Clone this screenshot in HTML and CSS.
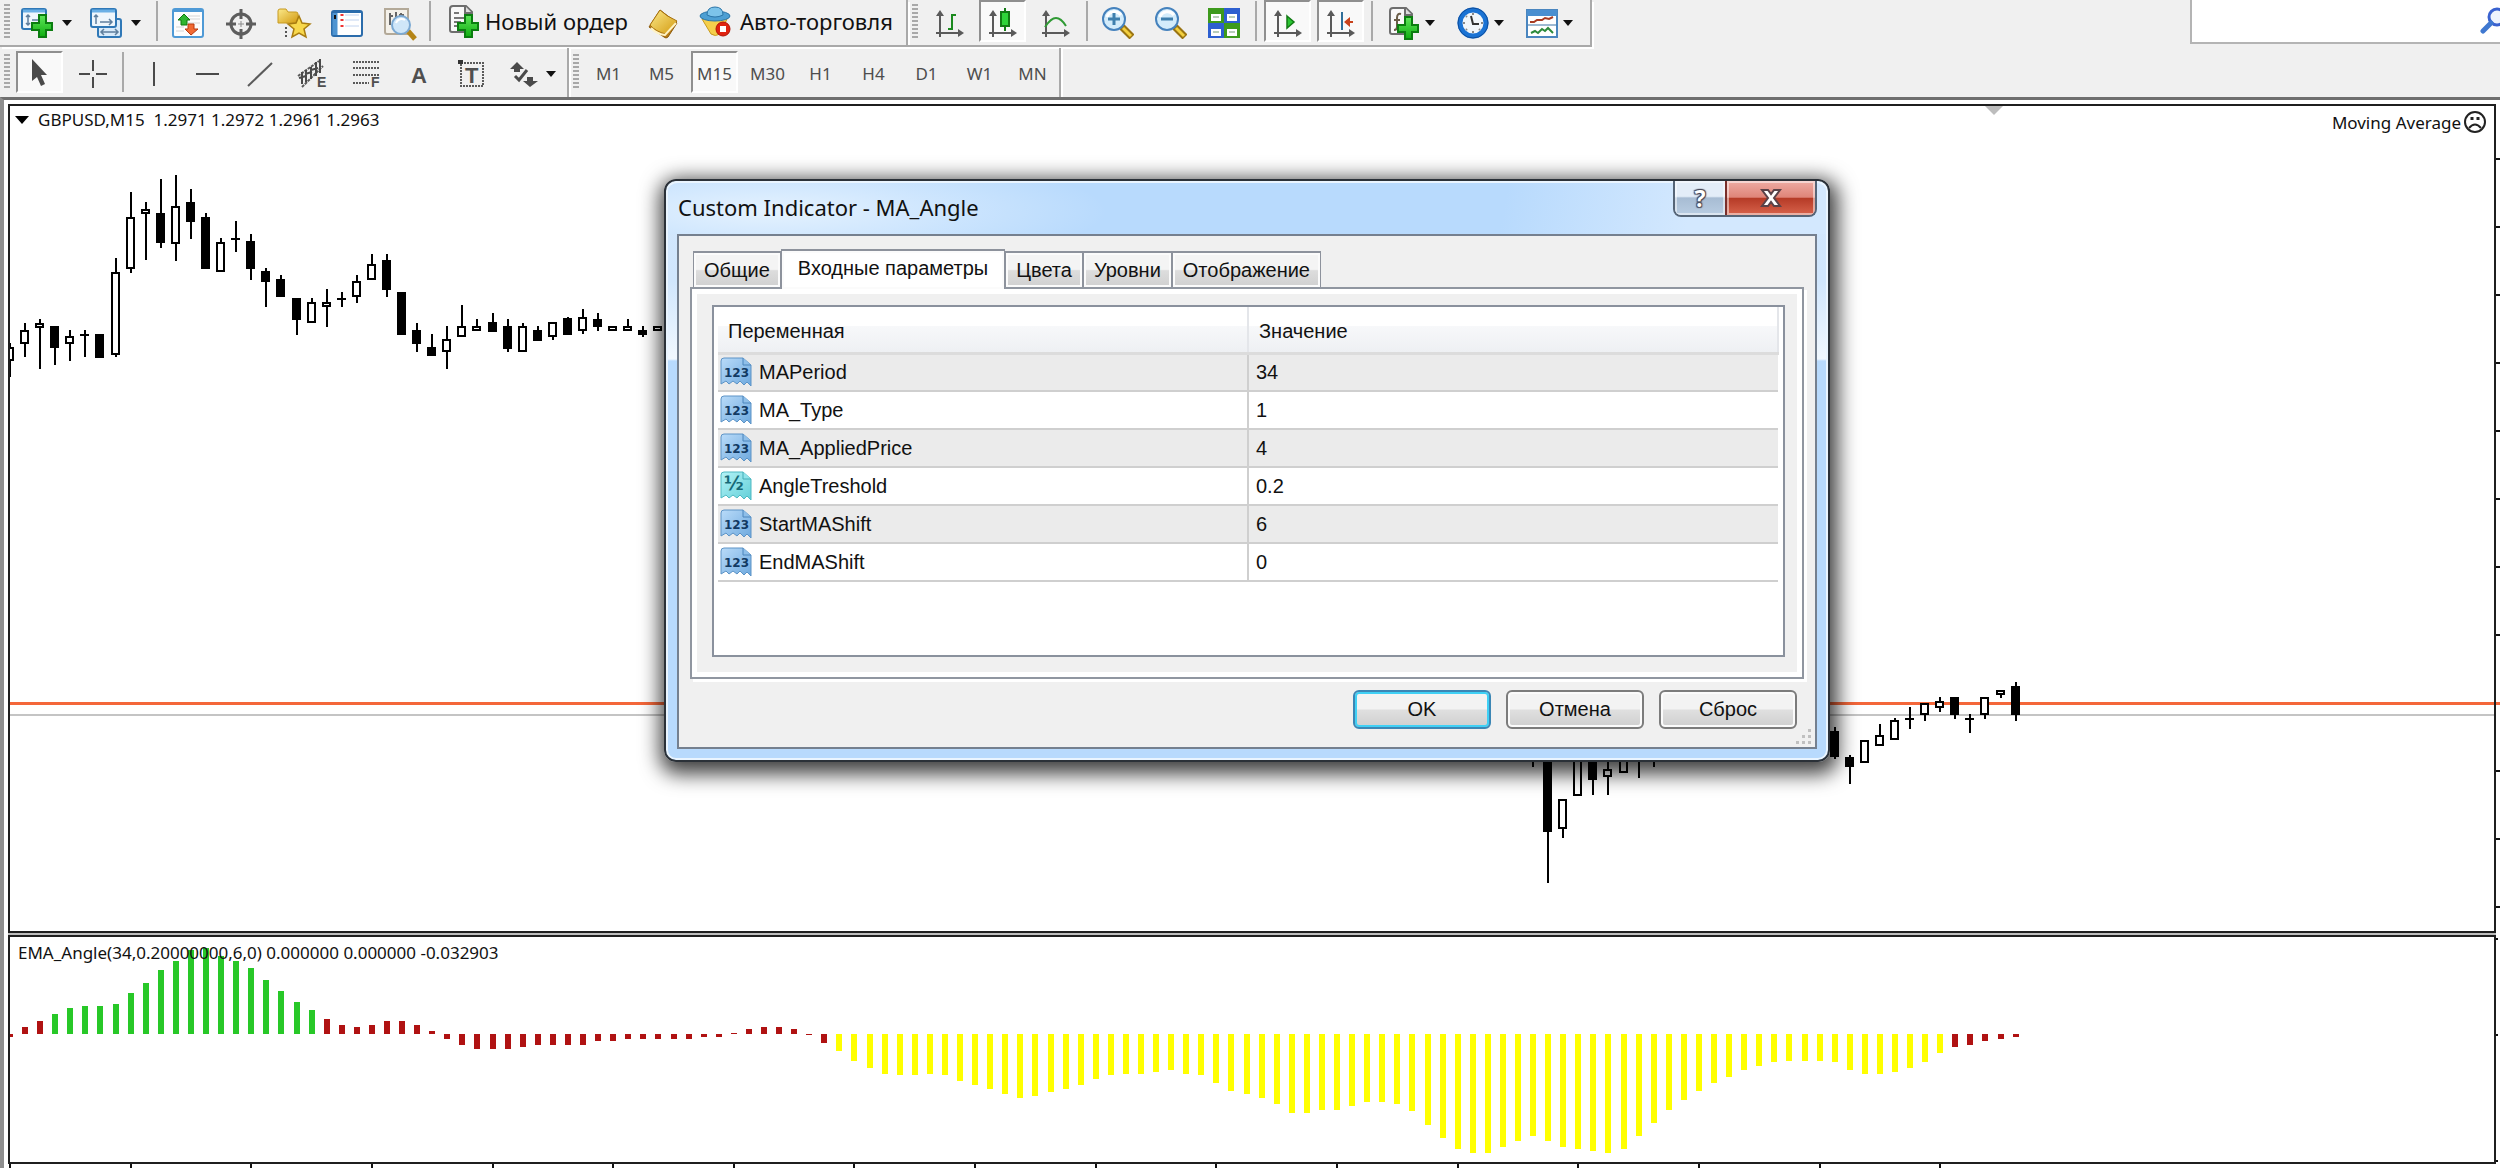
FILE: index.html
```html
<!DOCTYPE html>
<html lang="ru">

<head>
  <meta charset="UTF-8" />
  <title>GBPUSD,M15</title>
  <link rel="stylesheet" href="styles.css">
</head>

<body>
  <!-- shared icon parts -->
  <svg class="defs" aria-hidden="true">
    <defs>
      <linearGradient id="gPlus" x1="0" y1="0" x2="0" y2="1">
        <stop offset="0" stop-color="#5fe65a" /><stop offset="1" stop-color="#0fae10" />
      </linearGradient>
      <linearGradient id="gGold" x1="0" y1="0" x2="1" y2="1">
        <stop offset="0" stop-color="#fbe98a" /><stop offset="1" stop-color="#d39a10" />
      </linearGradient>
      <linearGradient id="gBlue" x1="0" y1="0" x2="1" y2="1">
        <stop offset="0" stop-color="#b9dbf9" /><stop offset="1" stop-color="#6ea9de" />
      </linearGradient>
      <linearGradient id="gCyan" x1="0" y1="0" x2="1" y2="1">
        <stop offset="0" stop-color="#b4f3f7" /><stop offset="1" stop-color="#62cfd8" />
      </linearGradient>
      <symbol id="plus" viewBox="0 0 22 24">
        <path d="M8 1h7v8h6v7h-6v7H8v-7H1V9h7z" fill="url(#gPlus)" stroke="#0b7d10" stroke-width="2" />
      </symbol>
      <symbol id="axes" viewBox="0 0 32 32">
        <path d="M7 5v25M3 26h24" stroke="#5a5a5a" stroke-width="2" />
        <path d="M3 9l4-6 4 6zM25 22l6 4-6 4z" fill="#5a5a5a" />
      </symbol>
      <symbol id="page" viewBox="0 0 32 32">
        <path d="M2 4q0-3 3-3h13l6 6v18q0 2-2 2H4q-2 0-2-2z" fill="#f8f8f8" stroke="#6e6e6e" stroke-width="2" />
        <path d="M17 1v7h7" fill="#ddd" stroke="#6e6e6e" stroke-width="2" />
      </symbol>
      <symbol id="lens" viewBox="0 0 32 32">
        <path d="M20 20l10 10" stroke="#9a7412" stroke-width="7" />
        <path d="M21 21l8 8" stroke="#f3cf3e" stroke-width="3" />
        <circle cx="12" cy="12" r="11" fill="#d3ecfb" stroke="#4582bd" stroke-width="2" />
        <path d="M5 10a8 8 0 0 1 14-2" fill="none" stroke="#fff" stroke-width="3" />
      </symbol>
      <symbol id="int" viewBox="0 0 32 30">
        <path d="M1 4q0-3 3-3h19l8 7v21l-4-4-3 3-4-4-3 3-4-3-4 3-3-3-5 3z" fill="url(#gBlue)" stroke="#5c93c6" />
        <path d="M23 1v7h8" fill="#8fbfe9" stroke="#4c86bd" />
        <text x="4" y="20" class="icon-num">123</text>
      </symbol>
      <symbol id="double" viewBox="0 0 32 30">
        <path d="M1 4q0-3 3-3h19l8 7v21l-4-4-3 3-4-4-3 3-4-3-4 3-3-3-5 3z" fill="url(#gCyan)" stroke="#4fb9c2" />
        <path d="M23 1v7h8" fill="#8fe3ea" stroke="#45adb7" />
        <text x="4" y="19" class="icon-num icon-frac">½</text>
      </symbol>
    </defs>
  </svg>

  <header class="toolbars">
    <div class="row">
      <div class="toolbar">
        <span class="grip"></span>
        <button class="tool drop" aria-label="Новый график">
          <svg class="icon" viewBox="0 0 32 32">
            <rect x="1" y="2" width="24" height="20" rx="2" fill="#eef6fc" stroke="#2f78b7" stroke-width="2" />
            <path d="M2 4h22" stroke="#6ab0e6" stroke-width="3" />
            <path d="M7 8v10M5 10l2-2 2 2M5 16l2 2 2-2M11 13h9" fill="none" stroke="#5f7f9d" stroke-width="1.5" />
            <use href="#plus" x="10" y="7" width="22" height="24" />
          </svg>
          <span class="caret"></span>
        </button>
        <button class="tool drop" aria-label="Профили">
          <svg class="icon" viewBox="0 0 32 32">
            <rect x="8" y="12" width="23" height="18" rx="2" fill="#d9ebfa" stroke="#2f78b7" stroke-width="2" />
            <path d="M11 25h17M14 22l-3 3 3 3M25 22l3 3-3 3" fill="none" stroke="#5f7f9d" stroke-width="1.5" />
            <rect x="1" y="2" width="25" height="18" rx="2" fill="#eef6fc" stroke="#2f78b7" stroke-width="2" />
            <path d="M2 4h23" stroke="#6ab0e6" stroke-width="3" />
            <path d="M6 8v9M4 10l2-2 2 2M10 15h12M19 12l3 3-3 3" fill="none" stroke="#5f7f9d" stroke-width="1.5" />
          </svg>
          <span class="caret"></span>
        </button>
        <span class="sep"></span>
        <button class="tool" aria-label="Обзор рынка">
          <svg class="icon" viewBox="0 0 32 32">
            <rect x="1" y="2" width="30" height="28" rx="2" fill="#fdfdfd" stroke="#4f9ad6" stroke-width="2" />
            <path d="M1 4h30" stroke="#4f9ad6" stroke-width="2" />
            <path d="M16 9h12M16 12h12M4 20h8M4 24h8M16 16h12" stroke="#d5d5d5" />
            <path d="M12 7l6 6h-3v5H9v-5H6z" fill="#2fb52f" stroke="#11790f" />
            <path d="M19 28l-6-6h3v-5h6v5h4z" fill="#f26a33" stroke="#b93a10" />
          </svg>
        </button>
        <button class="tool" aria-label="Окно данных">
          <svg class="icon" viewBox="0 0 32 32">
            <circle cx="16" cy="17" r="10" fill="none" stroke="#5d5d5d" stroke-width="3" />
            <path d="M16 2v10M16 22v10M1 17h10M21 17h10" stroke="#5d5d5d" stroke-width="3" />
            <path d="M16 14v6M13 17h6" stroke="#8a8a8a" />
          </svg>
        </button>
        <button class="tool" aria-label="Навигатор">
          <svg class="icon" viewBox="0 0 32 32">
            <path d="M0 4q0-2 2-2h6l2 3h8q2 0 2 2v9H0z" fill="url(#gGold)" stroke="#c79a21" />
            <path d="M8 20v10" stroke="#555" stroke-width="2" stroke-dasharray="2 2" />
            <path d="M21 9l3 7 8 1-6 5 2 8-7-4-7 4 2-8-6-5 8-1z" fill="#f8d84c" stroke="#a97c10" stroke-width="1.5" />
          </svg>
        </button>
        <button class="tool" aria-label="Терминал">
          <svg class="icon" viewBox="0 0 32 32">
            <rect x="1" y="4" width="30" height="25" rx="2" fill="#fff" stroke="#2b6cab" stroke-width="2" />
            <path d="M1 5h30" stroke="#2b6cab" stroke-width="2" />
            <path d="M4 6v22" stroke="#4e94d1" stroke-width="5" />
            <path d="M4 8v4" stroke="#111" stroke-width="2" />
            <path d="M11 7v2M11 12v2M11 18v2" stroke="#e33" stroke-width="3" />
            <path d="M14 8h14M14 13h14M14 19h14" stroke="#c2d4f0" />
          </svg>
        </button>
        <button class="tool" aria-label="Тестер стратегий">
          <svg class="icon" viewBox="0 0 32 32">
            <path d="M1 2h23v25H3q-2 0-2-2z" fill="#f4f1ea" stroke="#b3a998" stroke-width="2" />
            <path d="M6 6v12M5 9h4M12 5v8M17 6v9M15 8h5" stroke="#666" stroke-width="2" />
            <path d="M24 24l7 8" stroke="#b58517" stroke-width="5" />
            <circle cx="17" cy="18" r="9" fill="#cfe6f8" stroke="#7ba9d3" stroke-width="2" />
            <path d="M12 16a6 6 0 0 1 9-3" fill="none" stroke="#fff" stroke-width="2" />
          </svg>
        </button>
        <span class="sep"></span>
        <button class="tool labelled">
          <svg class="icon" viewBox="0 0 32 32">
            <use href="#page" width="32" height="32" />
            <path d="M6 8h5M6 13h13M6 17h7M6 21h4" stroke="#777" stroke-width="2" />
            <use href="#plus" x="9" y="9" width="22" height="24" />
          </svg>
          Новый ордер
        </button>
        <button class="tool" aria-label="MetaEditor">
          <svg class="icon" viewBox="0 0 32 32">
            <path d="M2 20L13 3l17 13-9 14q-2 2-4 0z" fill="#b87c16" stroke="#8d5b0d" />
            <path d="M3 18L13 3q6 6 17 11L19 27Q9 25 3 18z" fill="url(#gGold)" stroke="#a8720e" />
            <path d="M4 21q6 6 14 7l11-12" fill="none" stroke="#fff3c4" stroke-width="2" />
          </svg>
        </button>
        <button class="tool labelled auto">
          <svg class="icon" viewBox="0 0 32 32">
            <path d="M3 14h25l-7 15q-5 3-9 0z" fill="#f5cf4b" stroke="#c79a21" />
            <ellipse cx="16" cy="11" rx="15" ry="5" fill="#4d9fd3" stroke="#2b75a8" />
            <path d="M8 10q0-8 8-8t8 8q-8 4-16 0z" fill="#7cc3ea" stroke="#2b75a8" />
            <circle cx="24" cy="24" r="7" fill="#e02310" stroke="#b01405" />
            <rect x="21" y="21" width="6" height="6" fill="#fff" />
          </svg>
          Авто-торговля
        </button>
      </div>

      <div class="toolbar charts">
        <span class="grip"></span>
        <button class="tool" aria-label="Бары">
          <svg class="icon" viewBox="0 0 32 32">
            <use href="#axes" width="32" height="32" />
            <path d="M19 7v16M19 8h4M15 22h4" stroke="#1b8a1f" stroke-width="2" />
          </svg>
        </button>
        <button class="tool pressed" aria-label="Свечи">
          <svg class="icon" viewBox="0 0 32 32">
            <use href="#axes" width="32" height="32" />
            <path d="M19 1v23" stroke="#127a14" stroke-width="2" />
            <rect x="15" y="5" width="8" height="14" fill="#2fd339" stroke="#127a14" stroke-width="2" />
          </svg>
        </button>
        <button class="tool" aria-label="Линия">
          <svg class="icon" viewBox="0 0 32 32">
            <use href="#axes" width="32" height="32" />
            <path d="M6 20q6-9 11-9t10 8" fill="none" stroke="#2f9a34" stroke-width="2" />
          </svg>
        </button>
        <span class="sep"></span>
        <button class="tool" aria-label="Приблизить">
          <svg class="icon" viewBox="0 0 32 32">
            <use href="#lens" width="32" height="32" />
            <path d="M12 6v12M6 12h12" stroke="#3f80ae" stroke-width="3" />
          </svg>
        </button>
        <button class="tool" aria-label="Отдалить">
          <svg class="icon" viewBox="0 0 32 32">
            <use href="#lens" width="32" height="32" />
            <path d="M6 12h12" stroke="#3f80ae" stroke-width="3" />
          </svg>
        </button>
        <button class="tool" aria-label="Окна мозаикой">
          <svg class="icon" viewBox="0 0 32 32">
            <path d="M0 1h16v15H0zM16 16h16v15H16z" fill="#3d9a1c" />
            <path d="M16 1h16v15H16zM0 16h16v15H0z" fill="#2d5fd0" />
            <path d="M3 7h10v7H3zM19 7h10v7H19zM3 22h10v7H3zM19 22h10v7H19z" fill="#fff" />
            <path d="M5 10h6M21 10h6M5 25h6M21 25h6" stroke="#b9cdb9" stroke-width="2" />
          </svg>
        </button>
        <span class="sep"></span>
        <button class="tool pressed" aria-label="Автопрокрутка">
          <svg class="icon" viewBox="0 0 32 32">
            <use href="#axes" width="32" height="32" />
            <path d="M16 9l7 6-7 6z" fill="#2bc632" stroke="#127a14" stroke-width="1.5" />
          </svg>
        </button>
        <button class="tool pressed" aria-label="Сдвиг графика">
          <svg class="icon" viewBox="0 0 32 32">
            <use href="#axes" width="32" height="32" />
            <path d="M18 5v18" stroke="#2f6f9a" stroke-width="2" />
            <path d="M20 15l6-5v4h3v2h-3v4z" fill="#c8421b" />
          </svg>
        </button>
        <span class="sep"></span>
        <button class="tool drop" aria-label="Индикаторы">
          <svg class="icon" viewBox="0 0 32 32">
            <use href="#page" width="32" height="32" />
            <path d="M13 7q-4-1-4 4v9q0 3-3 3M6 13h6" fill="none" stroke="#6a5d48" stroke-width="2" />
            <use href="#plus" x="9" y="9" width="22" height="24" />
          </svg>
          <span class="caret"></span>
        </button>
        <button class="tool drop" aria-label="Периоды">
          <svg class="icon" viewBox="0 0 32 32">
            <circle cx="16" cy="16" r="13" fill="#f1f6fa" stroke="#1a73d4" stroke-width="5" />
            <circle cx="16" cy="16" r="15" fill="none" stroke="#0e4d9c" />
            <path d="M14 9l2 8h6" fill="none" stroke="#333" stroke-width="2" />
            <path d="M16 6v2M16 24v2M6 16h2M24 16h2M9 9l1 1M23 23l-1-1M9 23l1-1" stroke="#888" stroke-width="2" />
          </svg>
          <span class="caret"></span>
        </button>
        <button class="tool drop" aria-label="Шаблоны">
          <svg class="icon" viewBox="0 0 32 32">
            <rect x="1" y="3" width="30" height="27" fill="#fff" stroke="#4a86bf" stroke-width="2" />
            <path d="M1 6h30" stroke="#4a8fd0" stroke-width="6" />
            <path d="M2 18h28" stroke="#9db9d2" stroke-width="2" />
            <path d="M4 15h4l3-2h5l3-2 4 1 4-2" fill="none" stroke="#a83b22" stroke-width="2" />
            <path d="M5 26l4-2 3 2 4-4 3 2 3-3 5 5" fill="none" stroke="#2c8a3b" stroke-width="2" />
          </svg>
          <span class="caret"></span>
        </button>
      </div>

      <div class="search">
        <input type="search" aria-label="Поиск">
        <svg class="search-icon" viewBox="0 0 28 28" aria-hidden="true">
          <circle cx="17" cy="10" r="8" fill="#eef3fd" stroke="#3a62d0" stroke-width="3" />
          <path d="M11 16L3 24" stroke="#3f78d0" stroke-width="5" stroke-linecap="round" />
        </svg>
      </div>
    </div>

    <div class="row second">
      <div class="toolbar">
        <span class="grip"></span>
        <button class="tool pressed" aria-label="Курсор">
          <svg class="icon" viewBox="0 0 32 32">
            <path d="M8 1v22l5-4 4 9 4-2-4-9h6z" fill="#4a4a4a" />
          </svg>
        </button>
        <button class="tool" aria-label="Перекрестие">
          <svg class="icon" viewBox="0 0 32 32">
            <path d="M16 2v11M16 19v11M2 16h11M19 16h11" stroke="#4a4a4a" stroke-width="2" />
          </svg>
        </button>
        <span class="sep"></span>
        <button class="tool" aria-label="Вертикальная линия">
          <svg class="icon" viewBox="0 0 32 32"><path d="M16 4v24" stroke="#4a4a4a" stroke-width="2" /></svg>
        </button>
        <button class="tool" aria-label="Горизонтальная линия">
          <svg class="icon" viewBox="0 0 32 32"><path d="M5 16h23" stroke="#4a4a4a" stroke-width="2" /></svg>
        </button>
        <button class="tool" aria-label="Трендовая линия">
          <svg class="icon" viewBox="0 0 32 32"><path d="M4 28L28 5" stroke="#5a5a5a" stroke-width="2" /></svg>
        </button>
        <button class="tool" aria-label="Канал">
          <svg class="icon" viewBox="0 0 32 32">
            <path d="M1 18L22 3M5 29L26 8" stroke="#5a5a5a" stroke-width="2" stroke-dasharray="3 1" />
            <path d="M5 14v12M9 12v12M14 9v12M19 4v14M23 1v14M2 20l7-2M8 16l7-2M14 12l7-2" stroke="#4a4a4a" stroke-width="2" />
            <text x="20" y="29" class="icon-letter small">E</text>
          </svg>
        </button>
        <button class="tool" aria-label="Фибоначчи">
          <svg class="icon" viewBox="0 0 32 32">
            <path d="M3 4h26M3 10h26M3 17h26M3 25h16" stroke="#5a5a5a" stroke-width="2" stroke-dasharray="2 1" />
            <text x="21" y="29" class="icon-letter small">F</text>
          </svg>
        </button>
        <button class="tool" aria-label="Текст">
          <svg class="icon" viewBox="0 0 32 32"><text x="8" y="25" class="icon-letter">A</text></svg>
        </button>
        <button class="tool" aria-label="Текстовая метка">
          <svg class="icon" viewBox="0 0 32 32">
            <rect x="5" y="5" width="22" height="23" fill="none" stroke="#5a5a5a" stroke-width="2" stroke-dasharray="2 1" />
            <path d="M2 2h5v4H2z" fill="#333" />
            <text x="9" y="25" class="icon-letter">T</text>
          </svg>
        </button>
        <button class="tool drop" aria-label="Стрелки">
          <svg class="icon" viewBox="0 0 32 32">
            <path d="M7 4l7 7h-4v3H4v-3H0zM20 29l-7-6h4v-4h6v4h5z" fill="#4a4a4a" />
            <path d="M5 18l4 4 8-10" fill="none" stroke="#4a4a4a" stroke-width="3" />
          </svg>
          <span class="caret"></span>
        </button>
      </div>

      <div class="toolbar">
        <span class="grip"></span>
        <button class="tool period">M1</button>
        <button class="tool period">M5</button>
        <button class="tool period pressed">M15</button>
        <button class="tool period">M30</button>
        <button class="tool period">H1</button>
        <button class="tool period">H4</button>
        <button class="tool period">D1</button>
        <button class="tool period">W1</button>
        <button class="tool period">MN</button>
      </div>
    </div>
  </header>

  <main class="chart-window">
    <section class="pane">
      <svg class="plot" id="pricePlot"></svg>
      <div class="pane-title"><span class="tri"></span>GBPUSD,M15&nbsp; 1.2971 1.2972 1.2961 1.2963</div>
      <span class="shift-mark"></span>
      <div class="expert">Moving Average
        <svg class="face" viewBox="0 0 24 24">
          <circle cx="12" cy="12" r="10" fill="none" stroke="#222" stroke-width="2" />
          <path d="M9 7v3M15 7v3" stroke="#222" stroke-width="3" />
          <path d="M6 18q6-7 12 0" fill="none" stroke="#222" stroke-width="2" />
        </svg>
      </div>
    </section>
    <svg class="axis" id="priceAxis"></svg>
    <section class="pane">
      <svg class="plot" id="anglePlot"></svg>
      <div class="pane-title sub">EMA_Angle(34,0.20000000,6,0) 0.000000 0.000000 -0.032903</div>
    </section>
    <svg class="axis" id="angleAxis"></svg>
    <svg class="time-axis" id="timeAxis"></svg>
  </main>

  <!-- indicator properties dialog -->
  <div class="dialog" role="dialog" aria-labelledby="dlgTitle">
    <div class="titlebar">
      <h1 class="dialog-title" id="dlgTitle">Custom Indicator - MA_Angle</h1>
      <div class="caption-buttons">
        <button class="caption help" aria-label="Справка">?</button>
        <button class="caption close" aria-label="Закрыть">
          <svg class="close-icon" viewBox="0 0 22 20">
            <path d="M2 2h6l3 4 3-4h6l-6 8 6 8h-6l-3-4-3 4H2l6-8z" fill="#fff" stroke="#5a4248" stroke-width="2" />
          </svg>
        </button>
      </div>
    </div>
    <div class="client">
      <div class="tabs" role="tablist">
        <button class="tab" role="tab">Общие</button>
        <button class="tab active" role="tab" aria-selected="true">Входные параметры</button>
        <button class="tab" role="tab">Цвета</button>
        <button class="tab" role="tab">Уровни</button>
        <button class="tab" role="tab">Отображение</button>
      </div>
      <div class="tab-page">
        <div class="list">
          <table class="params">
            <thead>
              <tr><th>Переменная</th><th>Значение</th></tr>
            </thead>
            <tbody>
              <tr><td><span class="name"><svg class="type"><use href="#int" /></svg>MAPeriod</span></td><td>34</td></tr>
              <tr><td><span class="name"><svg class="type"><use href="#int" /></svg>MA_Type</span></td><td>1</td></tr>
              <tr><td><span class="name"><svg class="type"><use href="#int" /></svg>MA_AppliedPrice</span></td><td>4</td></tr>
              <tr><td><span class="name"><svg class="type"><use href="#double" /></svg>AngleTreshold</span></td><td>0.2</td></tr>
              <tr><td><span class="name"><svg class="type"><use href="#int" /></svg>StartMAShift</span></td><td>6</td></tr>
              <tr><td><span class="name"><svg class="type"><use href="#int" /></svg>EndMAShift</span></td><td>0</td></tr>
            </tbody>
          </table>
        </div>
      </div>
      <div class="actions">
        <button class="btn default">OK</button>
        <button class="btn">Отмена</button>
        <button class="btn">Сброс</button>
      </div>
      <svg class="resize" viewBox="0 0 16 16">
        <path d="M12 0h3v3h-3zM12 6h3v3h-3zM12 12h3v3h-3zM6 6h3v3H6zM6 12h3v3H6zM0 12h3v3H0z" fill="#c0c0c0" />
      </svg>
    </div>
  </div>

  <script src="chart.js"></script>
</body>

</html>
```

FILE: styles.css
```css
:root {
  --face: #f0f0f0;
  --line: #a9a9a9;
  --frame: #1f1f1f;
  --glass: #b8dafd;
  --ui: "Noto Sans", "Open Sans", sans-serif;
  --dlg: "Liberation Sans", Arial, sans-serif;
}
* {
  box-sizing: border-box;
  margin: 0;
  padding: 0;
}
body {
  display: flex;
  flex-direction: column;
  height: 100vh;
  overflow: hidden;
  background: var(--face);
  color: #111;
  font-family: var(--ui);
  font-size: 17px;
}
button {
  font: inherit;
  color: inherit;
  border: none;
  background: none;
}
.defs {
  position: absolute;
  width: 0;
  height: 0;
}

/* Toolbars */
.row {
  display: flex;
  height: 48px;
}
.row.second {
  height: 49px;
}
.toolbar {
  display: flex;
  align-items: flex-start;
  border-right: 2px solid var(--line);
  border-bottom: 2px solid var(--line);
  box-shadow: 2px 2px 0 #fff;
  padding-right: 6px;
  height: 47px;
}
.second .toolbar {
  border-bottom: none;
  box-shadow: 2px 0 0 #fff;
  padding: 3px 0 0;
  height: 49px;
}
.grip {
  width: 6px;
  height: 36px;
  margin: 4px 5px 0 4px;
  background: repeating-linear-gradient(#a8a8a8 0 2px, var(--face) 2px 4px);
}
.second .grip {
  margin: 3px 3px 0 4px;
}
.sep {
  width: 2px;
  height: 40px;
  margin: 1px 3px 0;
  background: var(--line);
}
.charts .sep {
  margin: 1px 4px 0;
}
.tool {
  display: flex;
  align-items: center;
  justify-content: center;
  width: 47px;
  height: 42px;
  margin: 0 3px;
  padding-top: 3px;
}
.tool.pressed {
  background: #f9f9f9;
  border: 2px solid #fff;
  border-top-color: #8f8f8f;
  border-left-color: #8f8f8f;
}
.tool.drop {
  width: 69px;
  margin: 0;
  justify-content: flex-start;
  padding-left: 6px;
  gap: 9px;
}
.charts .tool.drop {
  padding-left: 11px;
  gap: 5px;
}
.second .tool.drop {
  padding-left: 12px;
  gap: 4px;
}
.tool.labelled {
  width: auto;
  margin: 0;
  padding: 0 9px 0 14px;
  gap: 5px;
  font-size: 22px;
  white-space: nowrap;
}
.tool.auto {
  padding: 0 7px 0 9px;
  gap: 9px;
}
.icon {
  width: 32px;
  height: 32px;
  flex: none;
  overflow: visible;
}
.caret {
  border: 5px solid transparent;
  border-top: 6px solid #111;
  border-bottom: none;
}
.period {
  color: #4d4d4d;
}
.icon-letter {
  font: bold 22px "Liberation Sans", sans-serif;
  fill: #4f4f4f;
}
.icon-letter.small {
  font-size: 14px;
}
.search {
  display: flex;
  align-items: flex-start;
  flex: 0 0 310px;
  height: 44px;
  margin-left: auto;
  overflow: hidden;
  background: #fff;
  border-left: 2px solid #b4b4b4;
  border-bottom: 2px solid #b4b4b4;
}
.search input {
  flex: none;
  width: 288px;
  height: 42px;
  border: none;
  outline: none;
  font: inherit;
}
.search-icon {
  flex: none;
  width: 28px;
  height: 28px;
  margin-top: 7px;
}

/* Chart window */
.chart-window {
  flex: 1;
  min-height: 0;
  display: grid;
  grid-template-columns: 1fr 4px;
  grid-template-rows: 1fr 229px 4px;
  padding: 4px 0 0 4px;
  background: #fff;
  border-top: 3px solid #6f6f6f;
  border-left: 4px solid #8e8e8e;
}
.pane {
  position: relative;
  min-height: 0;
  overflow: hidden;
  border: 2px solid var(--frame);
}
.pane:first-child {
  margin-bottom: 2px;
  box-shadow: 0 2px 0 #bdbdbd;
}
.plot {
  position: absolute;
  inset: 0;
  width: 100%;
  height: 100%;
}
.axis,
.time-axis {
  display: block;
  width: 100%;
  height: 100%;
}
.pane-title {
  position: absolute;
  top: 2px;
  left: 5px;
  display: flex;
  align-items: center;
  white-space: nowrap;
}
.pane-title.sub {
  top: 4px;
  left: 8px;
}
.tri {
  margin-right: 9px;
  border: 7px solid transparent;
  border-top: 8px solid #000;
  border-bottom: none;
}
.shift-mark {
  position: absolute;
  top: 0;
  left: 1975px;
  border: 9px solid transparent;
  border-top: 9px solid #bdbdbd;
  border-bottom: none;
}
.expert {
  position: absolute;
  top: 4px;
  right: 7px;
  display: flex;
  align-items: center;
  gap: 2px;
}
.face {
  width: 24px;
  height: 24px;
}

/* Dialog */
.dialog {
  position: absolute;
  left: 664px;
  top: 179px;
  width: 1166px;
  padding: 0 11px 11px;
  border: 2px solid #2b3138;
  border-radius: 12px;
  background: linear-gradient(#d3e7fc 0, #d0e6fd 100px, #f1f8ff 178px, var(--glass) 180px);
  box-shadow: inset 0 0 0 2px #eaf5ff, 2px 6px 20px 6px rgba(0, 0, 0, 0.75);
  font-family: var(--dlg);
  font-size: 20px;
}
.titlebar {
  display: flex;
  justify-content: space-between;
  align-items: flex-start;
  height: 53px;
  margin: 0 -9px;
  padding: 0 9px 0 10px;
  border-top: 2px solid #eaf5ff;
  border-radius: 10px 10px 0 0;
  background:
    radial-gradient(ellipse 340px 60px at 100px 28px, rgba(240, 248, 255, 0.8) 0, rgba(240, 248, 255, 0) 100%),
    linear-gradient(100deg, var(--glass) 0 72%, #d3e8fe 88%);
}
.dialog-title {
  font: 22px var(--ui);
  margin-top: 9px;
}
.caption-buttons {
  display: flex;
  height: 36px;
  margin-top: -2px;
  border: 2px solid #566577;
  border-top: none;
  border-radius: 0 0 8px 8px;
  overflow: hidden;
}
.caption {
  display: flex;
  align-items: center;
  justify-content: center;
  box-shadow: inset 0 0 0 2px rgba(255, 255, 255, 0.5);
}
.caption.help {
  width: 50px;
  font: bold 23px var(--ui);
  color: #fff;
  text-shadow: 1px 1px 1px #445, -1px -1px 1px #445, 1px -1px 1px #445, -1px 1px 1px #445;
  background: linear-gradient(#e3edf8 0 45%, #a7bcd3 50%, #b9cde2);
}
.caption.close {
  width: 90px;
  background: linear-gradient(#eeaca4 0, #df8478 48%, #b53a26 50%, #d8634c 100%);
  border-left: 2px solid #7a2f2b;
}
.close-icon {
  width: 22px;
  height: 20px;
}
.client {
  position: relative;
  padding: 13px 11px 18px;
  background: var(--face);
  border: 2px solid #75808f;
}
.tabs {
  display: flex;
  align-items: flex-end;
  padding-left: 3px;
}
.tab {
  height: 36px;
  padding: 0 10px;
  border: 2px solid #8d929c;
  border-left-width: 1px;
  border-right-width: 1px;
  border-bottom: none;
  background: linear-gradient(#f4f4f4 0 48%, #dddddd 52%, #d0d0d0);
  box-shadow: inset 0 0 0 2px #fbfbfb;
  white-space: nowrap;
}
.tab.active {
  position: relative;
  height: 40px;
  margin-bottom: -2px;
  padding: 0 16px 4px;
  background: #fff;
}
.tab-page {
  padding: 16px 17px 20px 20px;
  border: 2px solid #9096a0;
  box-shadow: inset 0 0 0 5px #fff, 3px 3px 0 #fff;
}
.list {
  height: 352px;
  padding: 0 4px;
  border: 2px solid #8a919d;
  background: #fff;
}
.params {
  width: 100%;
  border-collapse: collapse;
  table-layout: fixed;
}
.params th {
  height: 46px;
  padding: 4px 0 0 10px;
  text-align: left;
  font-weight: normal;
  background: linear-gradient(#fff 0 42%, #f7f8fa 43%, #eef0f3);
  border-right: 2px solid #e4e6ea;
  border-bottom: 3px solid #dcdcdc;
}
.params td {
  height: 38px;
  padding-left: 7px;
  border-bottom: 2px solid #cfcfcf;
}
.params td:first-child {
  padding-left: 2px;
  border-right: 2px solid #cfcfcf;
}
.params tbody tr:nth-child(odd) {
  background: #ebebeb;
}
.name {
  display: flex;
  align-items: center;
  gap: 7px;
}
.type {
  width: 32px;
  height: 30px;
}
.icon-num {
  font: bold 12px "DejaVu Sans", sans-serif;
  fill: #123a63;
}
.icon-frac {
  font-size: 19px;
  fill: #176a78;
}
.actions {
  display: flex;
  justify-content: flex-end;
  gap: 15px;
  padding: 11px 7px 0 0;
}
.btn {
  width: 138px;
  height: 39px;
  border: 2px solid #7c7c7c;
  border-radius: 6px;
  background: linear-gradient(#f3f3f3 0 48%, #dfdfdf 52%, #cfcfcf);
  box-shadow: inset 0 0 0 2px #fbfbfb;
}
.btn.default {
  border-color: #3c86b4;
  box-shadow: inset 0 0 0 2px #3fd0f5;
}
.resize {
  position: absolute;
  right: 3px;
  bottom: 2px;
  width: 16px;
  height: 16px;
}
```

FILE: chart.js
```js
const NS = "http://www.w3.org/2000/svg";
const BAR_STEP = 15.08;
const PRICE_TOP = 106;
const ZERO_Y = 97;

function rect(svg, x, y, w, h, fill, stroke) {
  const r = document.createElementNS(NS, "rect");
  r.setAttribute("x", x);
  r.setAttribute("y", y);
  r.setAttribute("width", w);
  r.setAttribute("height", h);
  r.setAttribute("fill", fill);
  if (stroke) {
    r.setAttribute("stroke", stroke);
    r.setAttribute("stroke-width", 2);
  }
  svg.appendChild(r);
}

// bar index, high, body top, body bottom, low, 1 = falling bar
const candles = [
  [0, 343, 347, 361, 377, 0], [1, 323, 330, 344, 357, 0], [2, 319, 323, 327, 369, 0],
  [3, 326, 326, 348, 365, 1], [4, 330, 336, 344, 361, 0], [5, 330, 334, 336, 357, 1],
  [6, 334, 334, 358, 358, 1], [7, 258, 272, 355, 357, 0], [8, 192, 217, 269, 273, 0],
  [9, 202, 209, 214, 260, 0], [10, 179, 213, 243, 248, 1], [11, 175, 206, 244, 261, 0],
  [12, 189, 202, 222, 239, 1], [13, 213, 217, 269, 269, 1], [14, 238, 242, 272, 272, 0],
  [15, 221, 238, 239, 252, 1], [16, 234, 241, 269, 280, 1], [17, 268, 271, 282, 307, 1],
  [18, 275, 279, 297, 297, 1], [19, 298, 298, 320, 335, 1], [20, 298, 302, 323, 323, 0],
  [21, 289, 302, 306, 327, 0], [22, 292, 298, 299, 307, 1], [23, 275, 281, 297, 303, 0],
  [24, 254, 264, 280, 280, 0], [25, 254, 260, 290, 297, 1], [26, 292, 292, 335, 335, 1],
  [27, 323, 330, 344, 352, 1], [28, 334, 347, 356, 356, 1], [29, 326, 339, 352, 369, 0],
  [30, 305, 326, 337, 337, 0], [31, 319, 326, 331, 331, 0], [32, 313, 322, 332, 332, 1],
  [33, 319, 326, 349, 352, 1], [34, 323, 326, 352, 352, 0], [35, 326, 330, 341, 341, 1],
  [36, 322, 322, 337, 340, 0], [37, 317, 318, 335, 335, 1], [38, 309, 317, 331, 334, 0],
  [39, 313, 319, 327, 331, 1], [40, 326, 326, 331, 331, 0], [41, 319, 326, 331, 331, 0],
  [42, 326, 330, 335, 337, 1], [43, 326, 326, 331, 331, 0],
  [101, 740, 745, 750, 767, 1], [102, 740, 745, 832, 883, 1], [103, 799, 799, 829, 838, 0],
  [104, 740, 745, 796, 796, 0], [105, 740, 745, 780, 795, 1], [106, 740, 769, 777, 795, 0],
  [107, 740, 745, 773, 773, 0], [108, 740, 745, 750, 778, 1], [109, 740, 745, 750, 767, 1],
  [121, 727, 731, 757, 759, 1], [122, 755, 757, 767, 784, 1], [123, 740, 740, 763, 763, 0],
  [124, 724, 735, 746, 746, 0], [125, 718, 720, 740, 740, 0], [126, 707, 718, 719, 729, 1],
  [127, 703, 703, 715, 721, 0], [128, 697, 701, 708, 712, 0], [129, 697, 697, 715, 719, 1],
  [130, 714, 718, 719, 733, 1], [131, 697, 697, 715, 719, 0], [132, 690, 690, 694, 698, 0],
  [133, 682, 686, 715, 721, 1]
];

// EMA angle, one value per bar
const angle = [
  -3, 7, 13, 20, 26, 28, 28, 30, 41, 51, 64, 73, 84, 86, 78, 73, 66, 54, 43, 32, 24,
  15, 9, 7, 9, 13, 13, 9, 3, -5, -11, -15, -15, -15, -13, -11, -11, -11, -11, -7, -7,
  -5, -5, -5, -5, -5, -3, -3, 1, 5, 7, 7, 5, -1, -9, -17, -27, -34, -40, -41, -41, -40,
  -41, -47, -51, -55, -60, -64, -62, -58, -55, -51, -45, -41, -40, -40, -38, -36, -40,
  -41, -49, -57, -60, -64, -70, -79, -79, -76, -76, -72, -68, -68, -70, -77, -91, -104,
  -115, -119, -119, -113, -107, -102, -107, -113, -115, -117, -119, -115, -102, -89,
  -76, -66, -57, -49, -43, -36, -32, -28, -27, -27, -27, -28, -36, -40, -40, -38, -34,
  -28, -19, -13, -11, -7, -5, -3
];

function drawPrice() {
  const svg = document.getElementById("pricePlot");
  // ask and bid
  rect(svg, 0, 702 - PRICE_TOP, "100%", 3, "#f4673a");
  rect(svg, 0, 714 - PRICE_TOP, "100%", 2, "#c4c4c4");
  candles.forEach(([i, high, top, bottom, low, down]) => {
    const x = Math.round(i * BAR_STEP);
    rect(svg, x - 1, high - PRICE_TOP, 2, low - high, "#000");
    if (down) {
      rect(svg, x - 5, top - PRICE_TOP, 9, Math.max(bottom - top, 2), "#000");
    } else {
      rect(svg, x - 4, top + 1 - PRICE_TOP, 7, Math.max(bottom - top - 2, 3), "#fff", "#000");
    }
  });
}

function drawAngle() {
  const svg = document.getElementById("anglePlot");
  angle.forEach((v, i) => {
    const x = Math.round(i * BAR_STEP);
    const color = v > 19 ? "#28c828" : v < -16 ? "#ffff00" : "#b01212";
    rect(svg, x - 3, v > 0 ? ZERO_Y - v : ZERO_Y, 6, Math.abs(v), color);
  });
}

function drawAxes() {
  const price = document.getElementById("priceAxis");
  for (let y = 158; y < 930; y += 68) rect(price, 0, y - PRICE_TOP + 2, 4, 2, "#111");
  rect(price, 0, 702 - PRICE_TOP + 2, 4, 3, "#f4673a");
  const side = document.getElementById("angleAxis");
  [3, 99, 225].forEach(y => rect(side, 0, y, 2, 2, "#111"));
  const time = document.getElementById("timeAxis");
  for (let i = 0; i <= 128; i += 8) rect(time, Math.round(i * BAR_STEP) + 1, 0, 2, 4, "#111");
}

drawPrice();
drawAngle();
drawAxes();
```
